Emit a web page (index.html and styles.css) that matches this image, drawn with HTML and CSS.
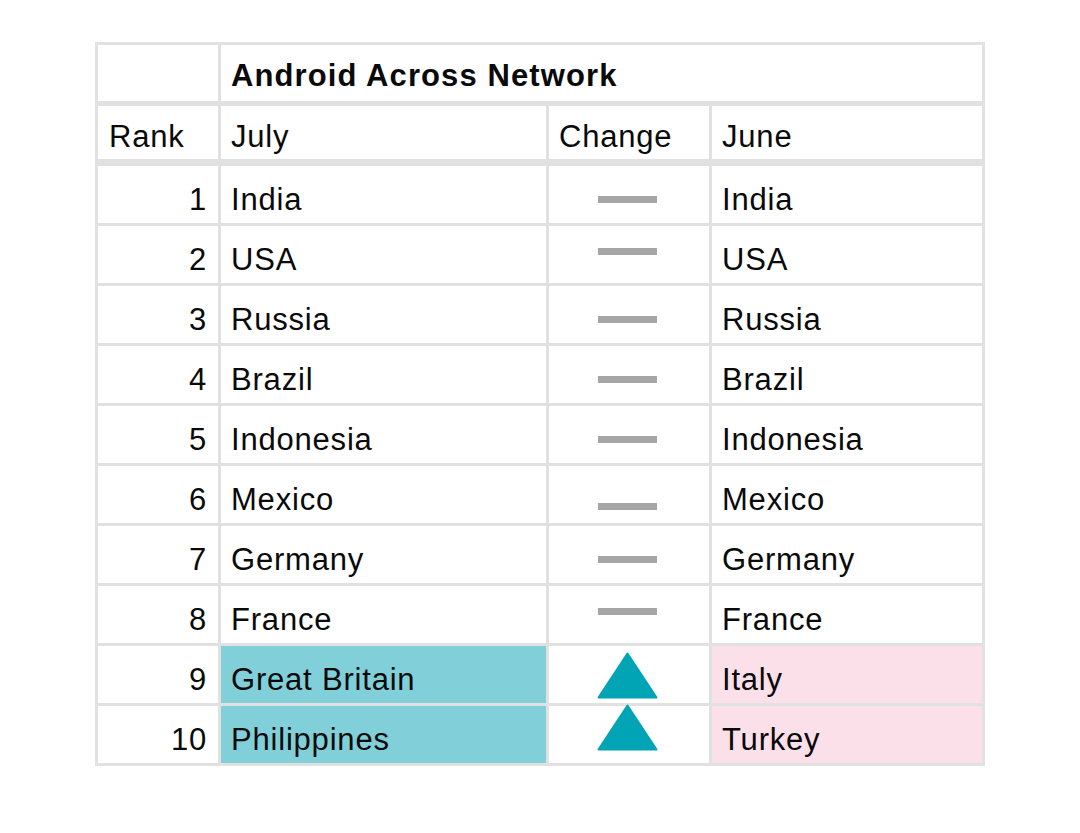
FILE: index.html
```html
<!DOCTYPE html>
<html lang="en">
<head>
<meta charset="utf-8">
<title>Android Across Network</title>
<link rel="stylesheet" href="styles.css">
</head>
<body>
<div class="page">
  <div class="ranking">
    <div class="row title-row">
      <div class="cell"></div>
      <div class="cell title">Android Across Network</div>
    </div>
    <div class="row head-row">
      <div class="cell">Rank</div>
      <div class="cell">July</div>
      <div class="cell">Change</div>
      <div class="cell">June</div>
    </div>

    <div class="row">
      <div class="cell rank">1</div>
      <div class="cell">India</div>
      <div class="cell change"><span class="dash"></span></div>
      <div class="cell">India</div>
    </div>
    <div class="row">
      <div class="cell rank">2</div>
      <div class="cell">USA</div>
      <div class="cell change"><span class="dash dash-high"></span></div>
      <div class="cell">USA</div>
    </div>
    <div class="row">
      <div class="cell rank">3</div>
      <div class="cell">Russia</div>
      <div class="cell change"><span class="dash"></span></div>
      <div class="cell">Russia</div>
    </div>
    <div class="row">
      <div class="cell rank">4</div>
      <div class="cell">Brazil</div>
      <div class="cell change"><span class="dash"></span></div>
      <div class="cell">Brazil</div>
    </div>
    <div class="row">
      <div class="cell rank">5</div>
      <div class="cell">Indonesia</div>
      <div class="cell change"><span class="dash"></span></div>
      <div class="cell">Indonesia</div>
    </div>
    <div class="row">
      <div class="cell rank">6</div>
      <div class="cell">Mexico</div>
      <div class="cell change"><span class="dash dash-low"></span></div>
      <div class="cell">Mexico</div>
    </div>
    <div class="row">
      <div class="cell rank">7</div>
      <div class="cell">Germany</div>
      <div class="cell change"><span class="dash"></span></div>
      <div class="cell">Germany</div>
    </div>
    <div class="row">
      <div class="cell rank">8</div>
      <div class="cell">France</div>
      <div class="cell change"><span class="dash dash-high"></span></div>
      <div class="cell">France</div>
    </div>
    <div class="row">
      <div class="cell rank">9</div>
      <div class="cell new-in">Great Britain</div>
      <div class="cell change">
        <svg class="arrow" viewBox="0 0 61 47" width="61" height="47"><path d="M30.5 1.5 L59.5 45.5 L1.5 45.5 Z" fill="#00a4b5" stroke="#00a4b5" stroke-width="2" stroke-linejoin="round"/></svg>
      </div>
      <div class="cell dropped">Italy</div>
    </div>
    <div class="row">
      <div class="cell rank">10</div>
      <div class="cell new-in">Philippines</div>
      <div class="cell change">
        <svg class="arrow arrow-high" viewBox="0 0 61 47" width="61" height="47"><path d="M30.5 1.5 L59.5 45.5 L1.5 45.5 Z" fill="#00a4b5" stroke="#00a4b5" stroke-width="2" stroke-linejoin="round"/></svg>
      </div>
      <div class="cell dropped">Turkey</div>
    </div>
  </div>
</div>
</body>
</html>
```

FILE: styles.css
```css
html, body {
  margin: 0;
  padding: 0;
  background: #ffffff;
}

body {
  font-family: "Liberation Sans", Arial, Helvetica, sans-serif;
  color: #0a0a0a;
}

.page {
  padding: 42px 0 0 95px;
}

.ranking {
  display: grid;
  grid-template-columns: 120px 325px 160px 270px;
  grid-template-rows: 56px 59px repeat(10, 57px);
  column-gap: 3px;
  row-gap: 3px;
  padding: 3px;
  width: max-content;
  background: #e1e1e1;
}

.row {
  display: contents;
}

.cell {
  background: #ffffff;
  display: flex;
  align-items: center;
  padding: 9px 10px 0 10px;
  font-size: 31px;
  letter-spacing: 0.8px;
  line-height: 1;
  white-space: nowrap;
  min-width: 0;
}

.title-row .cell {
  padding-top: 5px;
}

.title {
  grid-column: 2 / 5;
  font-weight: bold;
  letter-spacing: 1.1px;
}

.head-row .cell {
  margin: 2px 0 4px 0;
  padding-top: 8px;
}

.head-row .cell:first-child {
  padding-left: 11px;
}

.rank {
  justify-content: flex-end;
  padding-right: 11px;
}

.change {
  justify-content: center;
  padding: 0 3px 0 0;
}

.dash {
  display: block;
  width: 59px;
  height: 7px;
  background: #a6a6a6;
  margin-top: 9px;
}

.dash-high {
  margin-top: 0;
  margin-bottom: 7px;
}

.dash-low {
  margin-top: 24px;
}

.arrow {
  display: block;
  overflow: visible;
  margin-top: 1px;
}

.arrow-high {
  margin-top: 0;
  margin-bottom: 14px;
}

.new-in {
  background: #80cfd9;
}

.dropped {
  background: #fbdfe9;
}
```
